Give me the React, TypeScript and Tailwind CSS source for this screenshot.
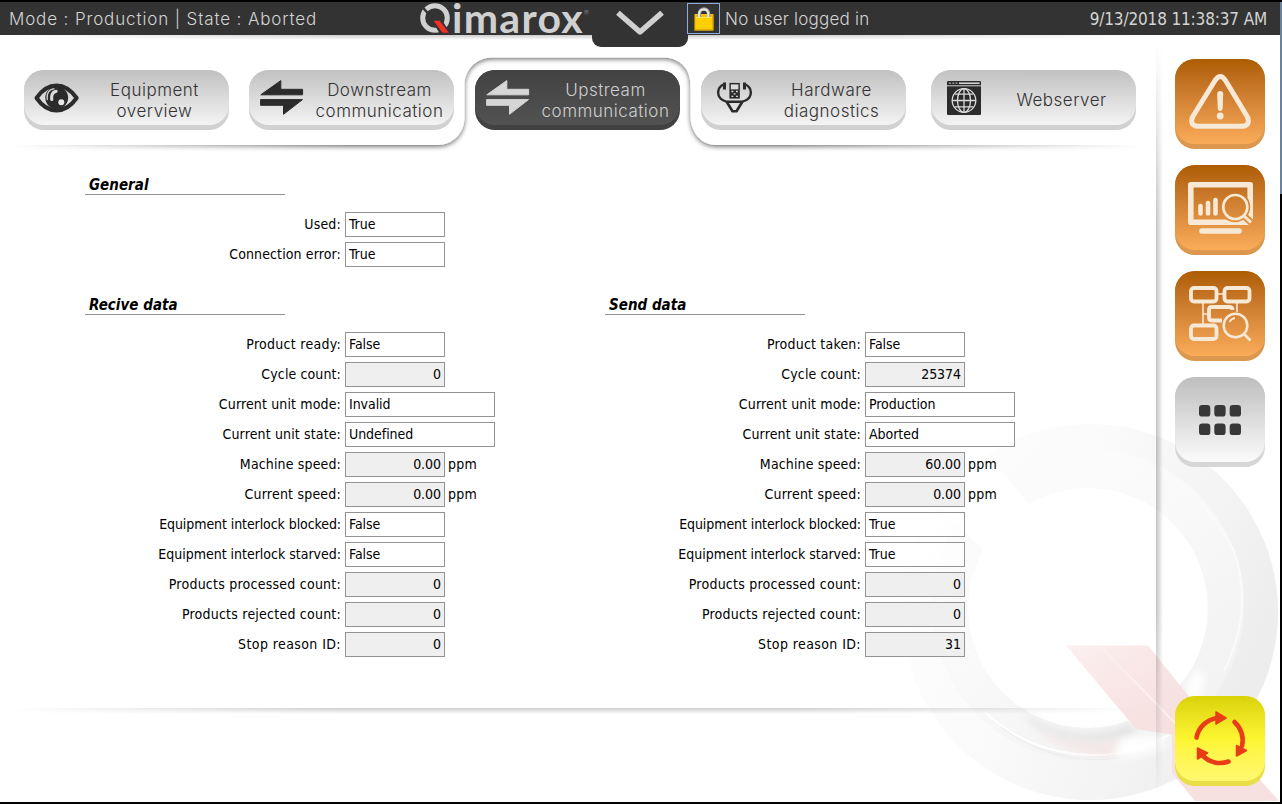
import type { ReactNode } from "react";

type Field = { label: string; value: string; track: string; kind?: "text" | "wide" | "number"; unit?: string };

const general: Field[] = [
  { label: "Used:", value: "True", track: "tracking-[0.200px]" },
  { label: "Connection error:", value: "True", track: "tracking-[0.120px]" },
];

const receive: Field[] = [
  { label: "Product ready:", value: "False", track: "tracking-[0.280px]" },
  { label: "Cycle count:", value: "0", kind: "number", track: "tracking-[0.120px]" },
  { label: "Current unit mode:", value: "Invalid", kind: "wide", track: "tracking-[0.140px]" },
  { label: "Current unit state:", value: "Undefined", kind: "wide", track: "tracking-[0.140px]" },
  { label: "Machine speed:", value: "0.00", kind: "number", unit: "ppm", track: "tracking-[0.150px]" },
  { label: "Current speed:", value: "0.00", kind: "number", unit: "ppm", track: "tracking-[0.210px]" },
  { label: "Equipment interlock blocked:", value: "False", track: "tracking-[-0.080px]" },
  { label: "Equipment interlock starved:", value: "False", track: "tracking-[-0.010px]" },
  { label: "Products processed count:", value: "0", kind: "number", track: "tracking-[0.240px]" },
  { label: "Products rejected count:", value: "0", kind: "number", track: "tracking-[0.230px]" },
  { label: "Stop reason ID:", value: "0", kind: "number", track: "tracking-[0.400px]" },
];

const send: Field[] = [
  { label: "Product taken:", value: "False", track: "tracking-[0.200px]" },
  { label: "Cycle count:", value: "25374", kind: "number", track: "tracking-[0.120px]" },
  { label: "Current unit mode:", value: "Production", kind: "wide", track: "tracking-[0.140px]" },
  { label: "Current unit state:", value: "Aborted", kind: "wide", track: "tracking-[0.140px]" },
  { label: "Machine speed:", value: "60.00", kind: "number", unit: "ppm", track: "tracking-[0.150px]" },
  { label: "Current speed:", value: "0.00", kind: "number", unit: "ppm", track: "tracking-[0.210px]" },
  { label: "Equipment interlock blocked:", value: "True", track: "tracking-[-0.080px]" },
  { label: "Equipment interlock starved:", value: "True", track: "tracking-[-0.010px]" },
  { label: "Products processed count:", value: "0", kind: "number", track: "tracking-[0.240px]" },
  { label: "Products rejected count:", value: "0", kind: "number", track: "tracking-[0.230px]" },
  { label: "Stop reason ID:", value: "31", kind: "number", track: "tracking-[0.400px]" },
];

const boxStyle = {
  text: "w-[100px] bg-white/60 justify-start",
  wide: "w-[150px] bg-white/60 justify-start",
  number: "w-[100px] bg-[#efefef] justify-end",
};

function FieldRow({ label, value, track, kind = "text", unit }: Field) {
  return (
    <div className="flex h-[25px] items-center">
      <div className={`w-[256px] text-right whitespace-nowrap ${track}`}>{label}</div>
      <div className={`ml-[4px] flex h-[25px] items-center border border-[#939393] px-[3px] ${boxStyle[kind]}`}>{value}</div>
      {unit && <div className="ml-[3px] tracking-[0.200px]">{unit}</div>}
    </div>
  );
}

function Section({ title, fields }: { title: string; fields: Field[] }) {
  return (
    <section className="w-[520px]">
      <h2 className="h-[20px] w-[200px] border-b border-[#939393] pl-[4px] text-[15px] leading-[20px] font-bold tracking-[0.020px] italic">
        {title}
      </h2>
      <div className="mt-[17px] flex flex-col gap-[5px]">
        {fields.map((f) => (
          <FieldRow key={f.label} {...f} />
        ))}
      </div>
    </section>
  );
}

function EyeIcon() {
  return (
    <svg viewBox="0 0 46 30" className="mt-[13px] ml-[10px] h-[30px] w-[46px]">
      <path d="M2.500 15C8 7 14.500 2.500 22.500 2.500S37 7 42.700 15C37 23 30.500 27.400 22.500 27.400S8 23 2.500 15Z" fill="none" stroke="#2b2b2b" strokeWidth="4" strokeLinejoin="round" />
      <circle cx="22.700" cy="14.700" r="11.400" fill="#2b2b2b" />
      <path d="M13.200 16.500C12.200 10.500 15.300 6 20 5.800" fill="none" stroke="#d6d6d6" strokeWidth="1.300" strokeLinecap="round" />
      <path d="M17.800 16.500c-.8-5 1.200-7.800 4.200-8.200" fill="none" stroke="#dedede" strokeWidth="3.200" strokeLinecap="round" />
      <circle cx="27.300" cy="19.300" r="3" fill="#e8e8e8" />
    </svg>
  );
}

function ArrowsIcon({ color }: { color: string }) {
  return (
    <svg viewBox="0 0 44 36" className="mt-[10px] ml-[11px] h-[36px] w-[44px]" fill={color} stroke={color} strokeLinejoin="round">
      <path d="M.8 14.800 20.800 .6V9.300H42.600V14.800Z" />
      <path d="M.6 19.600H42.500L23.500 34.300V25.300H.6Z" />
    </svg>
  );
}

function DiagnosticsIcon() {
  return (
    <svg viewBox="0 0 36 34" className="mt-[11px] ml-[16px] h-[34px] w-[36px]" fill="none" stroke="#2b2b2b">
      <path d="M7.500 3C-1 6.500-.5 16 6.500 19.500Q9 20.800 12 20.800H22.500Q25.500 20.800 28.500 19.500C35.500 16 36 6.500 27.500 3" strokeWidth="2.400" />
      <path d="M7.500 1.500V8.500M27.500 1.500V8.500" strokeWidth="3" />
      <path d="M9.500 20.500 15.500 30.300H19.500L25.500 20.500" strokeWidth="2.600" strokeLinejoin="round" />
      <rect x="13" y="2.500" width="9.200" height="14.500" fill="#2b2b2b" strokeWidth="1.200" />
      <rect x="13.800" y="3.400" width="7.600" height="5" fill="#dcdcdc" stroke="none" />
      <path d="M14.500 10.500h1.800M19 10.500h1.800M16.700 12.800h1.800M14.500 15.300h1.800M19 15.300h1.800" stroke="#dcdcdc" strokeWidth="1.300" />
    </svg>
  );
}

function WebIcon() {
  return (
    <svg viewBox="0 0 34 34" className="mt-[11px] ml-[16px] h-[34px] w-[34px]">
      <rect width="34" height="34" rx="1.200" fill="#2b2b2b" />
      <path d="M0 4.800H34" stroke="#d2d2d2" strokeWidth="1" />
      <path d="M12 2.200H32.500" stroke="#d2d2d2" strokeWidth="1.600" />
      <path d="M2 2.200h2M5.300 2.200h2M8.500 2.200h2" stroke="#aaa" strokeWidth="1.300" />
      <g fill="none" stroke="#dadada" strokeWidth="1.300">
        <circle cx="17" cy="19.500" r="11.800" />
        <ellipse cx="17" cy="19.500" rx="6.500" ry="11.800" />
        <path d="M17 7.700V31.300M5.200 19.500H28.800M7.500 13.200H26.500M7.500 25.800H26.500" />
      </g>
    </svg>
  );
}

function NavButton({ icon, lines, active, className = "" }: { icon: ReactNode; lines: string[]; active?: boolean; className?: string }) {
  const shell = active ? "bg-[#414141]" : "bg-[#d1d1d1]";
  const face = active ? "from-[#424242] to-[#525252] text-[#cfcfcf]" : "from-[#c1c1c1] to-[#f4f4f4] text-[#333]";
  return (
    <button className={`flex h-[60px] w-[205px] shrink-0 items-start rounded-[20px] ${shell} ${className}`}>
      <div className={`flex h-[55px] w-[205px] rounded-[20px] bg-linear-to-b ${face}`}>
        <div className="w-[66px] shrink-0">{icon}</div>
        <div className="flex w-[129px] shrink-0 flex-col justify-center pt-[6px] text-center font-['Inter',sans-serif] text-[17px] leading-[21px] font-light tracking-[0.500px] whitespace-nowrap">
          {lines.map((l) => (
            <span key={l}>{l}</span>
          ))}
        </div>
      </div>
    </button>
  );
}

function SideButton({ children, shell, face }: { children: ReactNode; shell: string; face: string }) {
  return (
    <button className={`flex h-[90px] w-[90px] shrink-0 items-start rounded-[20px] ${shell}`}>
      <div className={`h-[85px] w-[90px] rounded-[20px] bg-linear-to-b ${face}`}>
        <svg viewBox="0 0 90 85" className="h-[85px] w-[90px]">
          {children}
        </svg>
      </div>
    </button>
  );
}

function Backdrop() {
  return (
    <svg className="pointer-events-none absolute inset-0" width="1280" height="800" viewBox="0 2 1280 800">
      <defs>
        <linearGradient id="ring" x1="0" y1="0.100" x2="1" y2="0.500">
          <stop offset="0.100" stopColor="#fefefe" />
          <stop offset="0.450" stopColor="#fafafa" />
          <stop offset="0.750" stopColor="#f4f4f4" />
          <stop offset="1" stopColor="#ededed" />
        </linearGradient>
        <linearGradient id="ringInner" x1="0" y1="0" x2="0.800" y2="1">
          <stop offset="0" stopColor="#fdfdfd" />
          <stop offset="0.500" stopColor="#f9f9f9" />
          <stop offset="1" stopColor="#f1f1f1" />
        </linearGradient>
        <linearGradient id="tail" x1="0" y1="0" x2="1" y2="1">
          <stop offset="0" stopColor="#fbf0f0" />
          <stop offset="0.500" stopColor="#f9e5e5" />
          <stop offset="1" stopColor="#f5dede" />
        </linearGradient>
        <linearGradient id="fadeX" x1="0" x2="1" y1="0" y2="0">
          <stop offset="0.010" stopColor="#fff" stopOpacity="0" />
          <stop offset="0.300" stopColor="#fff" />
          <stop offset="0.680" stopColor="#fff" />
          <stop offset="0.990" stopColor="#fff" stopOpacity="0" />
        </linearGradient>
        <linearGradient id="fadeY" x1="0" x2="0" y1="0" y2="1">
          <stop offset="0.010" stopColor="#fff" stopOpacity="0" />
          <stop offset="0.250" stopColor="#fff" />
          <stop offset="0.750" stopColor="#fff" />
          <stop offset="0.990" stopColor="#fff" stopOpacity="0" />
        </linearGradient>
        <linearGradient id="down" x1="0" x2="0" y1="0" y2="1">
          <stop offset="0" stopColor="#000" stopOpacity="0.200" />
          <stop offset="1" stopColor="#000" stopOpacity="0" />
        </linearGradient>
        <linearGradient id="right" x1="0" x2="1" y1="0" y2="0">
          <stop offset="0" stopColor="#000" stopOpacity="0.240" />
          <stop offset="1" stopColor="#000" stopOpacity="0" />
        </linearGradient>
        <mask id="maskX" maskUnits="userSpaceOnUse" x="0" y="0" width="1280" height="802">
          <rect x="0" y="0" width="1156" height="802" fill="url(#fadeX)" />
        </mask>
        <mask id="maskY" maskUnits="userSpaceOnUse" x="0" y="0" width="1280" height="802">
          <rect x="1150" y="34" width="20" height="768" fill="url(#fadeY)" />
        </mask>
        <filter id="soft" x="-20%" y="-20%" width="140%" height="140%">
          <feGaussianBlur stdDeviation="4" />
        </filter>
        <filter id="drop" x="-5%" y="-10%" width="110%" height="130%">
          <feDropShadow dx="0" dy="1.500" stdDeviation="2.500" floodColor="#000" floodOpacity="0.600" />
        </filter>
        <clipPath id="ringCut">
          <path d="M1088 575 1003 473 945 403H1280V802H880V450L963 530 1000 567Z" />
        </clipPath>
      </defs>

      <g clipPath="url(#ringCut)">
        <path fillRule="evenodd" fill="url(#ring)" d="M1090 424a188 188 0 1 0 .1 0ZM1088 488a120 120 0 1 1-.1 0Z" />
        <path fillRule="evenodd" fill="url(#ringInner)" d="M1088 449a156 156 0 1 0 .1 0ZM1088 488a120 120 0 1 1-.1 0Z" />
        <path d="M985 712a156 157 0 0 0 187 21" fill="none" stroke="#fff" strokeWidth="2" />
        <path d="M1000 726a156 157 0 0 0 168 16" fill="none" stroke="#ebebeb" strokeWidth="1" />
        <path d="M1100 456q90 8 134 95 20 60-10 120" fill="none" stroke="#fafafa" strokeWidth="2" />
      </g>
      <path d="M1022 712q56 38 108 12l6 10q-56 18-104-10Z" fill="#d4d4d4" opacity="0.600" filter="url(#soft)" />
      <path d="M1040 732q42 20 88 10l-8 12q-42 2-80-20Z" fill="#f5d4d4" opacity="0.600" filter="url(#soft)" />
      <path d="M1122 738q30-4 48 2-20 20-58 16Z" fill="#fff" filter="url(#soft)" />
      <path d="M1186 690q8-24 18-18l-2 20-10 14Z" fill="#fff" filter="url(#soft)" />
      <path d="M1066 645.500H1148L1187 694V737L1136 729Z" fill="url(#tail)" />
      <path d="M1172 737 1187 694 1262 782 1279 801H1195L1172 773Z" fill="#f7e0e0" />
      <path d="M1100 646 1182 730" stroke="#fbefef" strokeWidth="2" />

      <g mask="url(#maskX)">
        <path
          filter="url(#drop)"
          fill="#fff"
          d="M-20 20H1200V145H716C700 145 690.500 131 690.500 116V85C690.500 68 679 57.500 663 57.500H493C476 57.500 464.500 70 464.500 85V117C464.500 134 452 145 438 145H-20Z"
        />
      </g>
      <rect x="0" y="35" width="1156" height="5" fill="url(#down)" mask="url(#maskX)" />
      <rect x="0" y="708" width="1156" height="6" fill="url(#down)" mask="url(#maskX)" />
      <rect x="1156" y="34" width="7" height="768" fill="url(#right)" mask="url(#maskY)" />
    </svg>
  );
}

const orangeShell = "bg-[#db984e]";
const orangeFace = "from-[#ad5d00] to-[#fbac59]";

export default function App() {
  return (
    <div className="h-[804px] w-[1282px] overflow-hidden bg-black pt-[2px] font-['DejaVu_Sans_Condensed','DejaVu_Sans',sans-serif]">
      <div className="flex">
        <div className="relative flex h-[800px] w-[1280px] flex-col overflow-hidden bg-white">
          <Backdrop />

          <header className="relative flex h-[33px] shrink-0 items-start bg-[#333] font-['Inter',sans-serif] text-[17px] leading-[35px] font-light text-[#d4d4d4]">
            <div className="w-[420px] pl-[9px] tracking-[0.870px] whitespace-nowrap">Mode : Production | State : Aborted</div>
            <div className="flex h-[33px] w-[172px] items-start">
              <svg viewBox="0 0 32 32" className="mt-[1px] h-[32px] w-[32px] shrink-0">
                <circle cx="15" cy="15" r="12.300" fill="none" stroke="#d0d0d0" strokeWidth="5" />
                <path d="M1 2.500 9 11.500" stroke="#333" strokeWidth="2.600" />
                <path d="M10.500 15.500H21L31 31H20Z" fill="#333" />
                <path d="M13.500 17.800H19.500L29 29.700H22.500Z" fill="#ee3124" />
              </svg>
              <div className="w-[132px] font-['Lato',sans-serif] text-[41px] leading-[32px] font-bold tracking-[1.300px] text-[#d0d0d0]">imarox</div>
              <div className="mt-[8px] text-[7px] leading-[8px] text-[#888]">®</div>
            </div>
            <div className="flex h-[45px] w-[96px] justify-center rounded-b-[9px] bg-[#333] pt-[9px]">
              <svg viewBox="0 0 48 26" className="h-[26px] w-[48px]">
                <path d="M4 3.500 24 21 44 3.500" fill="none" stroke="#d0d0d0" strokeWidth="5.500" strokeLinejoin="round" strokeLinecap="square" />
              </svg>
            </div>
            <div className="-ml-px mt-[1px] flex h-[31px] w-[33px] items-center justify-center border border-[#8faadc]">
              <svg viewBox="0 0 20 24" className="h-[24px] w-[20px]">
                <rect x=".5" y="7" width="19" height="16.500" rx=".6" fill="#f7c300" />
                <rect x="2.200" y="11" width="15.600" height="11" fill="#ffd000" />
                <path d="M.5 23H19V8" fill="none" stroke="#d39c00" strokeWidth="1" />
                <path d="M2 10.500H18" stroke="#ffe36a" strokeWidth="1" />
                <path d="M5.300 10V7a4.700 5 0 0 1 9.400 0V10" fill="none" stroke="#9a9a9a" strokeWidth="3.600" />
                <path d="M5 10V7a4.700 5 0 0 1 9.200-1V10" fill="none" stroke="#e4e4e4" strokeWidth="2" />
              </svg>
            </div>
            <div className="ml-[5px] tracking-[0.220px]">No user logged in</div>
            <div className="ml-auto pr-[13px] font-['DejaVu_Sans_Condensed','DejaVu_Sans',sans-serif] font-normal tracking-[-0.150px]">
              9/13/2018 11:38:37 AM
            </div>
          </header>

          <div className="relative flex grow">
            <main className="flex w-[1156px] flex-col">
              <nav className="flex pt-[35px] pl-[24px]">
                <NavButton icon={<EyeIcon />} lines={["Equipment", "overview"]} />
                <NavButton className="ml-[20px]" icon={<ArrowsIcon color="#2b2b2b" />} lines={["Downstream", "communication"]} />
                <NavButton className="ml-[21px]" active icon={<ArrowsIcon color="#d6d6d6" />} lines={["Upstream", "communication"]} />
                <NavButton className="ml-[21px]" icon={<DiagnosticsIcon />} lines={["Hardware", "diagnostics"]} />
                <NavButton className="ml-[25px]" icon={<WebIcon />} lines={["Webserver"]} />
              </nav>
              <div className="mt-[45px] flex flex-col gap-[20px] pl-[85px] text-[14px] leading-[25px] tracking-[-0.050px] text-black">
                <div className="h-[100px]">
                  <Section title="General" fields={general} />
                </div>
                <div className="flex">
                  <Section title="Recive data" fields={receive} />
                  <Section title="Send data" fields={send} />
                </div>
              </div>
            </main>

            <aside className="flex w-[124px] flex-col gap-[16px] pt-[24px] pb-[16px] pl-[19px]">
              <SideButton shell={orangeShell} face={orangeFace}>
                <path d="M40 21.500Q45.300 13.500 50.500 21.500L72.500 58Q75.500 66 68 67.200H22Q14.500 66 17.500 58Z" fill="none" stroke="#f8e8d6" strokeWidth="5" strokeLinejoin="round" />
                <path d="M42.200 35Q42.200 32 45.200 32T48.200 35L47.700 49Q47.500 52 45.200 52T42.700 49Z" fill="#f8e8d6" />
                <circle cx="45.200" cy="57" r="3.400" fill="#f8e8d6" />
              </SideButton>
              <SideButton shell={orangeShell} face={orangeFace}>
                <mask id="lens" maskUnits="userSpaceOnUse" x="0" y="0" width="90" height="85">
                  <rect width="90" height="85" fill="#fff" />
                  <circle cx="60" cy="42" r="15.200" fill="#000" />
                  <path d="M68 50 80 61" stroke="#000" strokeWidth="7" />
                </mask>
                <rect x="15.800" y="19.800" width="59.400" height="37.400" fill="none" stroke="#f8e8d6" strokeWidth="5.600" strokeLinejoin="round" mask="url(#lens)" />
                <path d="M27 66H64" stroke="#f8e8d6" strokeWidth="5.600" strokeLinecap="round" />
                <path d="M25.500 41V48.500M33 38V48.500M40.500 35V48.500" stroke="#f8e8d6" strokeWidth="4.600" strokeLinecap="round" />
                <circle cx="60.300" cy="42" r="12" fill="none" stroke="#f8e8d6" strokeWidth="2.700" />
                <path d="M68.500 50.500 76 57.500" stroke="#f8e8d6" strokeWidth="3" />
              </SideButton>
              <SideButton shell={orangeShell} face={orangeFace}>
                <g fill="none" stroke="#f8e8d6">
                  <path d="M42 23H49M28 31V54M62 31V41M28 43H33" strokeWidth="1.600" />
                  <rect x="16" y="17" width="25.500" height="13.500" rx="3" strokeWidth="3.800" />
                  <rect x="49.500" y="17" width="25" height="13.500" rx="3" strokeWidth="3.800" />
                  <path d="M47 49.500H37Q34 49.500 34 46.500V39Q34 36 37 36H54Q57.500 36 57.500 39" strokeWidth="3.800" />
                  <rect x="16" y="54.500" width="25.500" height="13.500" rx="3" strokeWidth="3.800" />
                  <circle cx="60.500" cy="54.500" r="11.800" strokeWidth="2.500" />
                  <path d="M69.500 63.500 75.500 69.500" strokeWidth="2.800" />
                  <path d="M54.500 51Q56.500 47.500 60 47" strokeWidth="1.800" />
                </g>
              </SideButton>
              <SideButton shell="bg-[#d6d6d6]" face="from-[#bebebe] to-[#fbfbfb]">
                <g fill="#383838">
                  <rect x="24" y="28" width="11.300" height="11.600" rx="3.200" />
                  <rect x="39.300" y="28" width="11.300" height="11.600" rx="3.200" />
                  <rect x="54.700" y="28" width="11.300" height="11.600" rx="3.200" />
                  <rect x="24" y="46.500" width="11.300" height="11.600" rx="3.200" />
                  <rect x="39.300" y="46.500" width="11.300" height="11.600" rx="3.200" />
                  <rect x="54.700" y="46.500" width="11.300" height="11.600" rx="3.200" />
                </g>
              </SideButton>
              <div className="mt-auto flex">
                <SideButton shell="bg-[#eade48]" face="from-[#dad205] via-[#fdf530] to-[#fff86e]">
                  <g fill="none" stroke="#e83d17" strokeWidth="4.600" strokeLinecap="round">
                    <path d="M21.500 41.500A24.500 24.500 0 0 1 42 22" />
                    <path d="M59.500 26A24.500 24.500 0 0 1 67 50" />
                    <path d="M53.500 65.500A24.500 24.500 0 0 1 28 60" />
                  </g>
                  <g fill="#e83d17" stroke="#e83d17" strokeWidth="1.500" strokeLinejoin="round">
                    <path d="M41 16 51 22 41 28Z" />
                    <path d="M61.500 49.500 71.500 54.500 61.500 60Z" />
                    <path d="M22.500 52V63L32.500 57Z" />
                  </g>
                </SideButton>
              </div>
            </aside>
          </div>
        </div>
        <div className="h-[192px] w-[2px] bg-[#6b8299]" />
      </div>
    </div>
  );
}
